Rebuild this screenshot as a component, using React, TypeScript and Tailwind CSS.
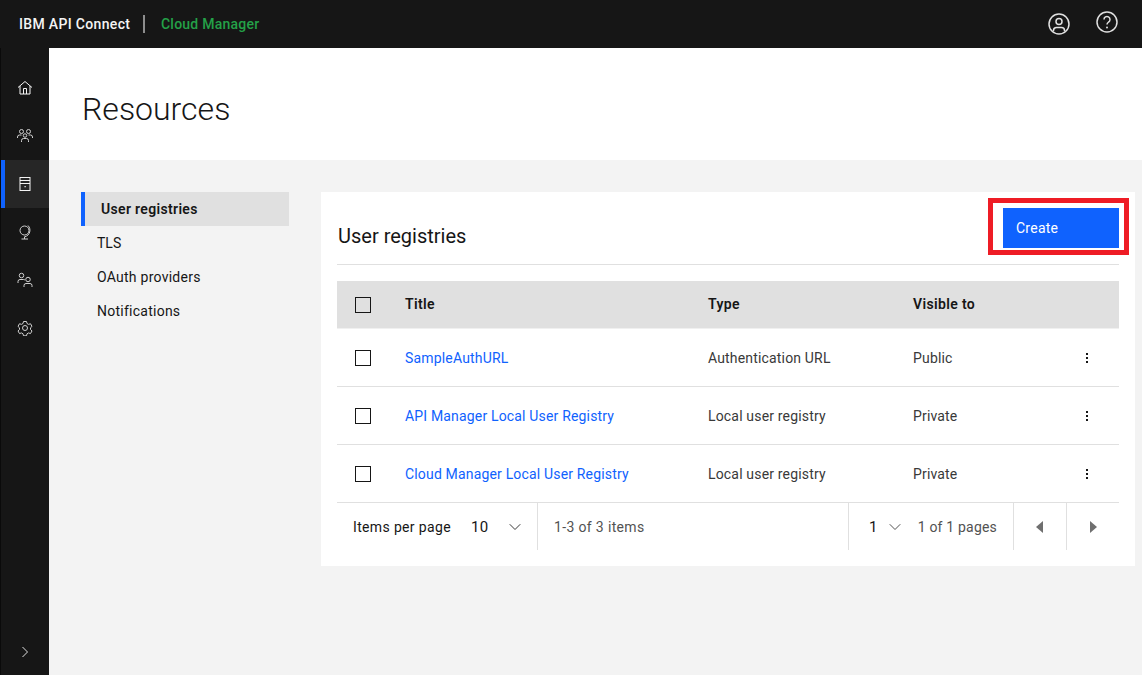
import { ChevronDown } from "lucide-react"
import type { ReactNode } from "react"

const font = "font-['Roboto','Liberation_Sans',sans-serif]"

function NavIcon({ children, bright }: { children: ReactNode; bright?: boolean }) {
  return (
    <svg width="16" height="16" viewBox="0 0 32 32" fill="none" stroke={bright ? "#f4f4f4" : "#d0d0d0"} strokeWidth="2">
      {children}
    </svg>
  )
}

const navItems: { key: string; active?: boolean; icon: ReactNode }[] = [
  {
    key: "home",
    icon: (
      <NavIcon bright>
        <path d="M2 15 16 3l14 12" />
        <path d="M6 12v16h20V12" />
        <path d="M13 28V17h6v11" />
      </NavIcon>
    ),
  },
  {
    key: "groups",
    icon: (
      <NavIcon>
        <circle cx="9" cy="7" r="4" />
        <circle cx="23" cy="7" r="4" />
        <circle cx="16" cy="15" r="3.5" />
        <path d="M1 20v-2a4 4 0 0 1 4-4h4" />
        <path d="M31 20v-2a4 4 0 0 0-4-4h-4" />
        <path d="M9 28v-3a4 4 0 0 1 4-4h6a4 4 0 0 1 4 4v3" />
      </NavIcon>
    ),
  },
  {
    key: "resources",
    active: true,
    icon: (
      <NavIcon bright>
        <rect x="6" y="3" width="20" height="26" />
        <path d="M6 9h20M6 15h20" />
        <rect x="15" y="20" width="2.5" height="2.5" fill="#f4f4f4" stroke="none" />
      </NavIcon>
    ),
  },
  {
    key: "globe",
    icon: (
      <NavIcon>
        <circle cx="15" cy="13" r="9" />
        <path d="M22 3a13.5 13.5 0 0 1-6 22.5" />
        <path d="M15 25v5M9 30h13" />
      </NavIcon>
    ),
  },
  {
    key: "users",
    icon: (
      <NavIcon>
        <circle cx="9" cy="7" r="4.5" />
        <path d="M2 22v-3a4 4 0 0 1 4-4h7a4 4 0 0 1 3 1.3" />
        <circle cx="22" cy="15" r="4.5" />
        <path d="M14 30v-3a4 4 0 0 1 4-4h8a4 4 0 0 1 4 4v3" />
      </NavIcon>
    ),
  },
  {
    key: "settings",
    icon: (
      <NavIcon>
        <path d="M13 3h6l1 4 3 1.7 4-1.2 3 5.2-3 2.9v3.4l3 2.9-3 5.2-4-1.2-3 1.7-1 4h-6l-1-4-3-1.7-4 1.2-3-5.2 3-2.9v-3.4l-3-2.9 3-5.2 4 1.2L12 7z" />
        <circle cx="16" cy="16" r="5" />
      </NavIcon>
    ),
  },
]

const rows = [
  { title: "SampleAuthURL", type: "Authentication URL", visible: "Public" },
  { title: "API Manager Local User Registry", type: "Local user registry", visible: "Private" },
  { title: "Cloud Manager Local User Registry", type: "Local user registry", visible: "Private" },
]

function Checkbox() {
  return <div className="w-4 h-4 border border-[#161616]" />
}

function Kebab() {
  return (
    <div className="flex flex-col gap-[2px] items-center">
      <span className="w-[2px] h-[2px] bg-[#161616]" />
      <span className="w-[2px] h-[2px] bg-[#161616]" />
      <span className="w-[2px] h-[2px] bg-[#161616]" />
    </div>
  )
}

export default function App() {
  return (
    <div className={`${font} w-[1142px] h-[675px] flex flex-col overflow-hidden bg-[#f3f3f3] text-[#161616]`}>
      <header className="h-12 shrink-0 bg-[#161616] flex items-center pl-[19px]">
        <span className="text-[14px] font-medium tracking-[0.33px] text-[#f4f4f4] w-[112px] whitespace-nowrap">IBM API Connect</span>
        <span className="w-[2px] h-[18px] bg-[#8d8d8d] ml-[12px] mb-[1px]" />
        <span className="text-[14px] font-medium tracking-[0.23px] text-[#24a148] ml-[16px]">Cloud Manager</span>
        <div className="ml-auto flex items-center gap-6 pr-[23px]">
          <svg width="24" height="24" viewBox="0 0 24 24" fill="none" stroke="#e0e0e0" strokeWidth="1.5">
            <circle cx="12" cy="12" r="10" />
            <circle cx="12" cy="9.5" r="3" />
            <path d="M6.5 19v-.5a3 3 0 0 1 3-3h5a3 3 0 0 1 3 3v.5" />
          </svg>
          <svg width="24" height="24" viewBox="0 0 24 24" fill="none" stroke="#e0e0e0" strokeWidth="1.5" className="-mt-[4px]">
            <circle cx="12" cy="12" r="10" />
            <path d="M9 9.5a3 3 0 1 1 4.6 2.5c-1 .7-1.6 1.3-1.6 2.5" />
            <circle cx="12" cy="17.5" r="1" fill="#e0e0e0" stroke="none" />
          </svg>
        </div>
      </header>

      <div className="flex-1 flex min-h-0">
        <aside className="w-[49px] shrink-0 bg-[#161616] border-l border-[#0a0a0a] flex flex-col pt-4">
          {navItems.map((item) => (
            <div
              key={item.key}
              className={`h-12 flex items-center justify-center ${
                item.active ? "bg-[#262626] border-l-4 border-[#0f62fe] pr-[5px]" : "pr-[1px]"
              }`}
            >
              {item.icon}
            </div>
          ))}
          <div className="mt-auto h-[46px] flex items-center justify-center pr-[1px]">
            <svg width="16" height="16" viewBox="0 0 32 32" fill="none" stroke="#e0e0e0" strokeWidth="2">
              <path d="M11 6l10 10-10 10" />
            </svg>
          </div>
        </aside>

        <main className="flex-1 min-w-0 flex flex-col">
          <div className="h-[112px] shrink-0 bg-white flex items-center pl-[33px]">
            <h1 className="text-[32px] font-light leading-10 mt-[9px]">Resources</h1>
          </div>

          <div className="flex-1 flex items-start pt-8 pl-[32px] pr-[7px]">
            <nav className="w-[208px] shrink-0 text-[14px] tracking-[0.25px]">
              <div className="h-[34px] flex items-center bg-[#e0e0e0] border-l-4 border-[#0f62fe] pl-4 font-semibold tracking-[0.33px]">
                User registries
              </div>
              <div className="h-[34px] flex items-center pl-4 tracking-normal">TLS</div>
              <div className="h-[34px] flex items-center pl-4">OAuth providers</div>
              <div className="h-[34px] flex items-center pl-4">Notifications</div>
            </nav>

            <section className="ml-[32px] flex-1 bg-white px-4 pt-4 pb-4">
              <div className="relative h-[57px] flex items-start justify-between border-b border-[#e0e0e0]">
                <h2 className="text-[20px] leading-7 mt-[14px] ml-[1px]">User registries</h2>
                <button className="w-[116px] h-10 bg-[#0f62fe] text-white text-[14px] tracking-[0.25px] text-left pl-[13px]">Create</button>
                <div className="absolute -top-[10px] -right-[10px] w-[141px] h-[57px] border-[5px] border-[#ee1c25]" />
              </div>

              <div className="mt-4 h-12 bg-[#e0e0e0] border-b border-[#f0f0f0] flex items-center text-[14px] font-semibold tracking-[0.35px]">
                <div className="w-[68px] pl-[18px]">
                  <Checkbox />
                </div>
                <div className="w-[303px]">Title</div>
                <div className="w-[205px]">Type</div>
                <div>Visible to</div>
              </div>

              {rows.map((row) => (
                <div key={row.title} className="h-[58px] flex items-center text-[14px] tracking-[0.17px] border-b border-[#e0e0e0] pt-[1px]">
                  <div className="w-[68px] pl-[18px]">
                    <Checkbox />
                  </div>
                  <div className="w-[303px] text-[#0f62fe]">{row.title}</div>
                  <div className="w-[205px] text-[#393939]">{row.type}</div>
                  <div className="w-[173px] text-[#393939]">{row.visible}</div>
                  <Kebab />
                </div>
              ))}

              <div className="h-[47px] flex items-stretch text-[14px] tracking-[0.35px]">
                <div className="w-[201px] flex items-center pl-4 pt-[1px] border-r border-[#e0e0e0]">
                  <span>Items per page</span>
                  <span className="ml-[20px] text-[15px]">10</span>
                  <ChevronDown className="ml-[16px] w-5 h-5 text-[#393939]" strokeWidth={1.2} />
                </div>
                <div className="flex items-center pl-[16px] pt-[1px] text-[#525252]">1-3 of 3 items</div>
                <div className="ml-auto flex items-stretch">
                  <div className="w-[165px] flex items-center pl-[20px] pt-[1px] border-l border-[#e0e0e0] tracking-[0.2px]">
                    <span className="text-[15px]">1</span>
                    <ChevronDown className="ml-[7px] w-5 h-5 text-[#525252]" strokeWidth={1.2} />
                    <span className="ml-[13px] text-[#525252]">1 of 1 pages</span>
                  </div>
                  <div className="w-[53px] flex items-center justify-center pr-[2px] border-l border-[#e0e0e0]">
                    <span className="w-0 h-0 border-y-[6px] border-y-transparent border-r-[7px] border-r-[#6f6f6f]" />
                  </div>
                  <div className="w-[53px] flex items-center justify-center border-l border-[#e0e0e0]">
                    <span className="w-0 h-0 border-y-[6px] border-y-transparent border-l-[7px] border-l-[#6f6f6f]" />
                  </div>
                </div>
              </div>
            </section>
          </div>
        </main>
      </div>
    </div>
  )
}
